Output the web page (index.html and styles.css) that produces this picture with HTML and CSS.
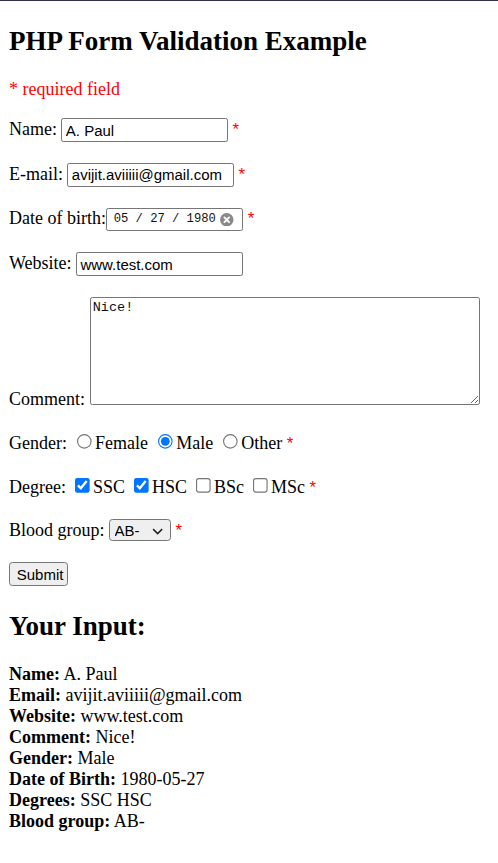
FILE: index.html
```html
<!DOCTYPE html>
<html>
<head>
<meta charset="utf-8">
<title>PHP Form Validation Example</title>
<link rel="stylesheet" href="styles.css">
</head>
<body>
<h2 class="title">PHP Form Validation Example</h2>
<p class="error">* required field</p>
<form class="form">
  Name: <input type="text" class="txt" value="A. Paul"> <span class="star">*</span>
  <br><br>
  E-mail: <input type="text" class="txt" value="avijit.aviiiii@gmail.com"> <span class="star">*</span>
  <br><br>
  Date of birth:<span class="date"><span class="date-val">05 / 27 / 1980</span><svg class="clear" width="12" height="12" viewBox="0 0 12 12"><circle cx="6" cy="6" r="6" fill="#8a8a8a"/><path d="M3.9 3.9 L8.1 8.1 M8.1 3.9 L3.9 8.1" stroke="#fff" stroke-width="1.6" stroke-linecap="round"/></svg></span> <span class="star">*</span>
  <br><br>
  Website: <input type="text" class="txt" value="www.test.com">
  <br><br>
  Comment: <textarea class="comment">Nice!</textarea>
  <br><br>
  Gender:
  <input type="radio" name="g" class="radio">Female
  <input type="radio" name="g" class="radio" checked>Male
  <input type="radio" name="g" class="radio">Other
  <span class="star">*</span>
  <br><br>
  Degree:
  <input type="checkbox" class="check" checked>SSC
  <input type="checkbox" class="check" checked>HSC
  <input type="checkbox" class="check">BSc
  <input type="checkbox" class="check">MSc
  <span class="star">*</span>
  <br><br>
  Blood group:
  <span class="sel-wrap"><select class="sel"><option>AB-</option></select><svg class="chev" width="10" height="6" viewBox="0 0 10 6"><path d="M1 1 L5 5 L9 1" fill="none" stroke="#222" stroke-width="1.3"/></svg></span>
  <span class="star">*</span>
  <br><br>
  <input type="button" class="btn" value="Submit">
</form>
<h2 class="title title-input">Your Input:</h2>
<div class="result">
<b>Name:</b> A. Paul<br>
<b>Email:</b> avijit.aviiiii@gmail.com<br>
<b>Website:</b> www.test.com<br>
<b>Comment:</b> Nice!<br>
<b>Gender:</b> Male<br>
<b>Date of Birth:</b> 1980-05-27<br>
<b>Degrees:</b> SSC HSC<br>
<b>Blood group:</b> AB-
</div>
</body>
</html>
```

FILE: styles.css
```css
html {
  border-top: 1px solid #33304a;
  background: #fff;
}
body {
  zoom: 1.125;
  margin: 2px 8px 8px;
  font-family: "Liberation Serif", "Times New Roman", serif;
  font-size: 16px;
  color: #000;
}
.title {
  font-size: 24px;
  font-weight: bold;
  margin: 20px 0;
}
.title-input {
  margin-top: 22px;
}
.error {
  color: #ff0000;
  margin: 16px 0;
}
.star {
  color: #ff0000;
  font-family: "Liberation Sans", Arial, sans-serif;
  font-size: 15px;
}
.txt {
  font-family: "Liberation Sans", Arial, sans-serif;
  font-size: 13.33px;
  width: 148px;
  box-sizing: border-box;
  height: 21px;
  padding: 1px 3px;
  border: 1px solid #767676;
  border-radius: 2px;
  color: #000;
}
.date {
  display: inline-flex;
  align-items: center;
  gap: 4px;
  box-sizing: border-box;
  width: 122px;
  height: 21px;
  padding: 0 5px 0 6px;
  border: 1px solid #767676;
  border-radius: 2px;
  vertical-align: middle;
  white-space: nowrap;
  font-family: "Liberation Mono", "Courier New", monospace;
  font-size: 10.8px;
  color: #111;
}
.comment {
  font-family: "Liberation Mono", "Courier New", monospace;
  font-size: 12px;
  width: 347px;
  height: 96px;
  box-sizing: border-box;
  border: 1px solid #767676;
  border-radius: 2px;
  padding: 2px;
  color: #111;
}
.radio {
  margin: 3px 3px 0 5px;
}
.check {
  margin: 3px 3px 3px 4px;
}
.sel-wrap {
  position: relative;
  display: inline-block;
}
.sel {
  appearance: none;
  -webkit-appearance: none;
  font-family: "Liberation Sans", Arial, sans-serif;
  font-size: 13.33px;
  width: 55px;
  height: 20px;
  padding: 0 4px;
  border: 1px solid #767676;
  border-radius: 3px;
  background: #efefef;
  color: #000;
}
.chev {
  position: absolute;
  right: 7px;
  top: 8px;
  pointer-events: none;
}
.btn {
  font-family: "Liberation Sans", Arial, sans-serif;
  font-size: 13.33px;
  width: 52px;
  height: 21px;
  padding: 1px 6px;
  border: 1px solid #767676;
  border-radius: 3px;
  background: #efefef;
  color: #000;
}
```
